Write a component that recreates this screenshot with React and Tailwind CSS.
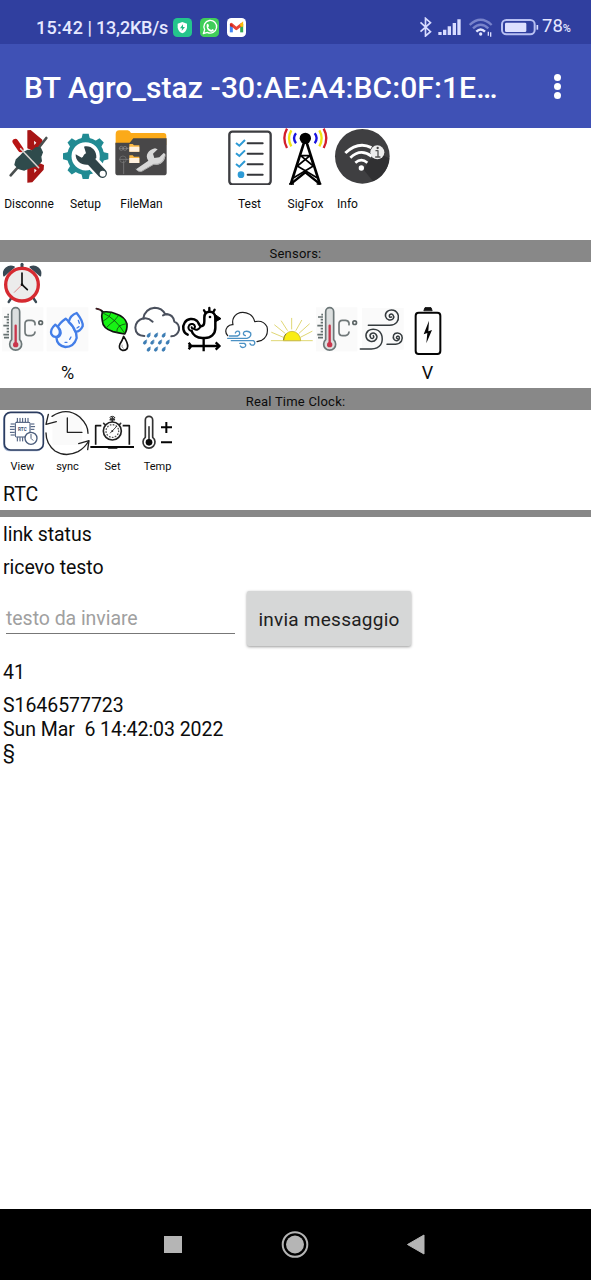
import React from "react";

function Icon({ box, className, children }) {
  return (
    <svg viewBox={box} className={className} fill="none" strokeLinecap="round" strokeLinejoin="round">
      {children}
    </svg>
  );
}

const big = "block h-[57px] w-full";
const mid = "block h-[45px] w-[45px] overflow-visible";

const Disconnect = () => (
  <Icon box="0 9 171 171" className={big}>
    <path d="M82 16 L92 15 L127 44 L128 58 L104 80 L82 70 Z M82 120 L104 108 L132 120 L131 134 L97 172 L82 173 Z" fill="#a81515" />
    <path d="M32 151 L56 124 M118 66 L139 39" stroke="#4a5050" strokeWidth="8" />
    <path d="M70 83 L84 76 L96 78 L108 68 L121 69 L127 82 L122 95 L124 108 L112 122 L92 127 L73 135 L57 131 L45 119 L49 104 L60 94 Z" fill="#2f4b4c" stroke="#2f4b4c" strokeWidth="4" />
    <path d="M46 50 L62 73" stroke="#b81414" strokeWidth="17" />
    <path d="M62 71 L116 128" stroke="#d7d2ce" strokeWidth="4.5" />
    <path d="M102 47 L109 53 L103 60 Z M103 131 L110 136 L103 144 Z" fill="#fff" />
  </Icon>
);

const gearTeeth = [0, 45, 90, 135, 180, 225, 270, 315];

const Setup = () => (
  <Icon box="170 9 168 171" className={big}>
    <circle cx="256" cy="94" r="49" stroke="#218b93" strokeWidth="13" />
    {gearTeeth.map((a) => (
      <path key={a} d="M243 43 L247 26 H265 L269 43 Z" fill="#218b93" transform={`rotate(${a} 256 94)`} />
    ))}
    <path d="M270 106 L308 146" stroke="#fff" strokeWidth="42" />
    <path d="M262 98 L306 145" stroke="#2f4449" strokeWidth="28" />
    <path d="M251 65 C271 60 290 76 288 99 L264 119 C246 122 225 110 226 88 L244 98 L258 88 Z" fill="#2f4449" />
    <circle cx="307" cy="146" r="9" fill="#fff" />
  </Icon>
);

const FileMan = () => (
  <Icon box="338 9 168 171" className={big}>
    <path d="M346 28 Q346 16 357 16 H382 Q388 16 392 24 H490 Q498 24 498 34 V60 H346 Z" fill="#fbaa19" />
    <path d="M345 53 H388 L399 40 H499 V143 Q499 151 490 151 H354 Q345 151 345 143 Z" fill="#484748" />
    <path d="M357 70 H384 M357 103 H384 M370 108 V146" stroke="#8b8b8b" strokeWidth="2" />
    <circle cx="363" cy="70" r="6" stroke="#8b8b8b" strokeWidth="2" />
    <circle cx="374" cy="70" r="6" stroke="#8b8b8b" strokeWidth="2" />
    <circle cx="368" cy="103" r="10" stroke="#777" strokeWidth="2" />
    <path d="M387 57 H397 L401 61 H417 V80 H387 Z M387 91 H397 L401 95 H417 V114 H387 Z" fill="#fbb844" />
    <path d="M387 65 H417 V80 H387 Z M387 99 H417 V114 H387 Z" fill="#fff0de" />
    <path d="M407 133 L444 107 C432 91 445 74 464 70 L472 73 L458 86 L462 99 L477 97 L490 84 L495 87 C496 109 480 123 460 118 L424 139 Q413 141 407 133 Z" fill="#d8d8d8" />
    <path d="M407 133 Q414 142 424 139 L460 118 Q488 121 494 93" stroke="#aaa" strokeWidth="3" />
  </Icon>
);

const TestList = () => (
  <Icon box="63 9 168 171" className={big}>
    <rect x="88" y="20" width="124" height="158" rx="9" fill="#fff" stroke="#3c3d41" strokeWidth="7" />
    <path d="M143 55 H188 M143 86 H188 M143 118 H188 M143 149 H188" stroke="#35363a" strokeWidth="6" />
    <path d="M108 54 L118 62 L135 45 M108 85 L118 93 L135 76 M108 117 L118 125 L135 108" stroke="#2d9bd6" strokeWidth="6" strokeLinecap="butt" strokeLinejoin="miter" />
    <circle cx="123" cy="149" r="10" fill="#2d9bd6" />
  </Icon>
);

const SigFox = () => (
  <Icon box="231 9 168 171" className={big}>
    <g strokeWidth="7" strokeLinecap="butt">
      <path d="M261 11 Q245 40 261 69 M371 11 Q387 40 371 69" stroke="#d31f2b" />
      <path d="M274 16 Q260 40 274 64 M358 16 Q372 40 358 64" stroke="#f1e414" />
      <path d="M288 25 Q276 40 288 55 M344 25 Q356 40 344 55" stroke="#1813df" />
    </g>
    <circle cx="316" cy="40" r="17" fill="#000" />
    <g stroke="#000" strokeLinecap="butt">
      <path d="M313 50 L272 178 M319 50 L360 178" strokeWidth="8" />
      <path d="M302 92 H330 L292 123 L351 158 M330 92 L341 123 M302 92 L340 123 L281 158" strokeWidth="5" />
      <path d="M272 177 L316 142 L360 177" strokeWidth="7" />
      <path d="M267 177 H282 M350 177 H364" strokeWidth="5" />
    </g>
  </Icon>
);

const Info = () => (
  <Icon box="399 9 171 171" className={big}>
    <circle cx="487" cy="94" r="82" fill="#3f3f41" />
    <path d="M491 134 L510 103 L552 92 L568 100 A82 82 0 0 1 519 169 Z" fill="#303032" />
    <g stroke="#fff" strokeLinecap="butt">
      <path d="M436 84 Q475 48 514 68" strokeWidth="9" />
      <path d="M451 98 Q482 69 515 94" strokeWidth="8" />
      <path d="M466 113 Q484 98 502 113" strokeWidth="8" />
    </g>
    <circle cx="484" cy="129" r="8" fill="#fff" />
    <circle cx="532" cy="82" r="21" fill="#ededed" />
    <path d="M528 77 H534 V95 M527 96 H540" stroke="#555" strokeWidth="4" />
    <circle cx="533" cy="69" r="3.5" fill="#444" />
  </Icon>
);

const Alarm = () => (
  <Icon box="0 83 135 135" className={mid}>
    <path d="M36 188 L26 203 M98 188 L108 203" stroke="#394954" strokeWidth="7" />
    <path d="M12 124 A22 22 0 0 1 42 98 Z M121 124 A22 22 0 0 0 91 98 Z" fill="#394954" stroke="#394954" strokeWidth="5" />
    <path d="M66 90 V100" stroke="#394954" strokeWidth="9" />
    <circle cx="66" cy="151" r="49" fill="#ececec" stroke="#d62a31" strokeWidth="10" />
    <path d="M66 116 V151 L82 166" stroke="#111" strokeWidth="5" />
    <path d="M66 151 L43 174" stroke="#d45151" strokeWidth="2" />
    <circle cx="66" cy="151" r="4" fill="#111" />
  </Icon>
);

const Thermo = ({ box = "0 216 135 135" }) => (
  <Icon box={box} className={mid}>
    <rect x="6" y="217" width="124" height="132" fill="#fafafa" />
    <path d="M35 314 V230 A12 12 0 0 1 59 230 V314 A18 18 0 1 1 35 314 Z" fill="#dcdfdf" stroke="#6c7778" strokeWidth="5" />
    <path d="M47 272 V325" stroke="#c9364c" strokeWidth="7" />
    <circle cx="47" cy="329" r="8" fill="#c9364c" />
    <path d="M22 239 H27 M12 246 H27 M20 254 H27 M20 263 H27 M10 272 H27 M20 281 H27 M20 290 H27 M10 299 H27 M12 308 H27" stroke="#657070" strokeWidth="5" strokeLinecap="butt" />
    <path d="M105 269 V264 Q103 256 94 256 H85 Q75 256 75 267 V291 Q75 302 86 302 H94 Q104 301 105 291" stroke="#707879" strokeWidth="5" />
    <circle cx="122" cy="263" r="5.5" stroke="#5d6667" strokeWidth="5" />
  </Icon>
);

const Drops = () => (
  <Icon box="135 216 135 135" className={mid}>
    <rect x="140" y="217" width="125" height="132" fill="#fafafa" />
    <g stroke="#437ee8" strokeWidth="7">
      <path d="M197 251 Q178 264 173 277 Q181 281 182 294 Q180 306 169 307 Q171 332 196 336 Q222 336 230 309 Q230 277 197 251 Z" fill="#f8fbff" />
      <path d="M166 269 Q150 283 154 297 Q160 308 171 305 Q182 300 179 286 Q174 275 166 269 Z" fill="#f8fbff" />
      <path d="M230 234 Q211 240 206 261 Q220 272 226 290 Q240 291 248 274 Q250 259 230 234 Z" fill="#f8fbff" />
      <path d="M235 256 L238 265 M237 275 L231 279 M213 306 L209 313 M201 322 H195" strokeWidth="4" />
    </g>
  </Icon>
);

const Leaf = () => (
  <Icon box="270 216 135 135" className={mid}>
    <path d="M289 221 Q301 222 310 232" stroke="#111" strokeWidth="5" />
    <path d="M290 221 L302 225" stroke="#8c2432" strokeWidth="2" />
    <path d="M307 231 Q330 228 349 237 Q376 246 381 267 Q382 285 374 297 Q355 294 339 290 Q308 280 307 258 Q303 244 307 231 Z" fill="#17f314" stroke="#111" strokeWidth="5" />
    <path d="M309 234 Q348 251 374 295 M328 244 L332 234 M326 246 Q317 254 310 258 M343 257 Q352 246 355 242 M343 257 Q331 266 321 276 M358 273 Q369 267 380 266 M358 273 Q349 281 350 292" stroke="#124d12" strokeWidth="2.5" />
    <path d="M371 304 Q367 317 360 327 Q354 341 367 346 Q382 347 383 334 Q384 324 371 304 Z" fill="#fff" stroke="#111" strokeWidth="5" />
    <path d="M366 330 Q363 337 370 340" stroke="#999" strokeWidth="3" />
  </Icon>
);

const rainDrops = [[445, 301], [467, 301], [490, 301], [434, 322], [456, 322], [479, 322], [502, 322], [445, 343], [467, 343], [490, 343]];

const Rain = () => (
  <Icon box="405 216 135 135" className={mid}>
    <path d="M433 303 Q407 302 406 278 Q408 256 430 250 Q435 221 464 218 Q486 218 496 238 Q519 236 523 260 Q539 267 537 285 Q532 303 514 304 M430 251 Q444 247 458 260 M489 241 Q497 237 504 238" stroke="#4a505d" strokeWidth="6" />
    {rainDrops.map(([x, y]) => (
      <path key={`${x}-${y}`} d={`M${x + 5} ${y - 7} Q${x - 6} ${y - 2} ${x - 4} ${y + 4} Q${x + 2} ${y + 9} ${x + 5} ${y + 2} Z`} fill="#3d7db4" stroke="#3d7db4" strokeWidth="2" />
    ))}
  </Icon>
);

const Rooster = () => (
  <Icon box="15 21 135 135" className={mid}>
    <g stroke="#000" strokeWidth="7.5">
      <path d="M38 104 C24 99 21 80 29 68 C37 55 55 54 65 62 C72 68 72 78 78 79 C86 79 88 72 88 64 V53 C88 41 95 35 104 35 C114 35 121 42 121 53 V84 C121 103 107 114 90 114 H82 C66 114 53 105 50 93" />
      <path d="M50 93 C40 92 38 82 43 75 C49 69 59 72 60 80 C60 87 51 88 50 82 M58 87 C64 92 72 88 76 81" strokeWidth="6" />
      <path d="M86 114 V154 M40 138 H132 M41 128 L49 138 L41 148 M122 127 L134 138 L122 149" strokeLinecap="butt" strokeWidth="7" />
    </g>
    <path d="M122 45 L138 56 L122 65 Z" fill="#000" stroke="#000" strokeWidth="3" />
    <path d="M91 37 L87 31 M103 33 V24 M115 36 L119 29" stroke="#000" strokeWidth="7" />
    <circle cx="105" cy="51" r="4" fill="#000" />
  </Icon>
);

const WindCloud = () => (
  <Icon box="150 21 135 135" className={mid}>
    <path d="M158 107 Q147 94 157 81 Q164 73 174 74 Q169 53 187 41 Q205 32 224 43 Q235 49 239 65 Q265 59 276 80 Q282 108 260 121 L246 125" stroke="#202020" strokeWidth="3.5" />
    <g stroke="#4b91c4" strokeWidth="4">
      <path d="M163 108 H187 Q198 104 192 94 Q184 91 181 99 M158 115 H216 Q230 111 227 99 Q220 91 208 95 Q201 103 211 107 M169 122 H236 Q243 129 236 135 Q226 137 225 130 M194 130 H208 Q216 135 209 141 Q200 145 196 138" />
    </g>
  </Icon>
);

const Sun = () => (
  <Icon box="285 21 135 135" className={mid}>
    <path d="M289 122 H412 M290 97 L323 111 M299 75 L329 99 M319 63 L337 91 M350 55 V87 M380 61 L363 91 M403 72 L372 100 M411 94 L378 111" stroke="#d9ce58" strokeWidth="2.5" />
    <path d="M325 121 A26 27 0 0 1 377 121 Z" fill="#f9ed12" stroke="#c4b638" strokeWidth="2.5" />
    <path d="M326 119 A25 26 0 0 1 332 102" stroke="#5b5630" strokeWidth="2" />
  </Icon>
);

const Wind = () => (
  <Icon box="150 216 135 135" className={mid}>
    <rect x="156" y="219" width="125" height="125" fill="#fafafa" />
    <g stroke="#353b3e" strokeWidth="4.5">
      <path d="M175 271 H239 C259 270 267 258 265 242 C261 224 242 221 232 229 C222 238 226 252 237 255 C249 257 255 247 249 240 C242 233 234 242 240 247 L245 246" />
      <path d="M151 342 H184 C212 341 219 323 216 304 C211 281 187 279 175 287 C163 298 167 315 181 319 C197 322 206 307 197 297 C187 289 176 299 182 308 C188 314 194 307 190 302" />
      <path d="M231 328 H257 C275 326 280 312 275 301 C269 292 255 292 251 300 C247 311 254 318 262 317 C270 314 270 304 264 303 C258 304 258 311 263 311" />
    </g>
  </Icon>
);

const Battery = () => (
  <Icon box="285 216 135 135" className={mid}>
    <path d="M342 226 L345 218 H363 L366 226 Z" fill="#111" stroke="#111" strokeWidth="3" />
    <rect x="317" y="233" width="74" height="124" rx="9" stroke="#050505" strokeWidth="6" />
    <path d="M357 257 L341 298 L352 294 L349 325 L366 285 L355 289 Z" fill="#050505" />
  </Icon>
);

const RtcView = () => (
  <Icon box="0 78 135 135" className={mid}>
    <rect x="9" y="84" width="120" height="115" rx="19" fill="#aebdd8" />
    <rect x="13" y="82" width="117" height="113" rx="19" fill="#fff" stroke="#2b3c60" strokeWidth="5" />
    <rect x="46" y="112" width="44" height="44" rx="3" stroke="#3b4f72" strokeWidth="3" />
    <path d="M52 100 V110 M60 100 V110 M68 100 V110 M76 100 V110 M84 100 V110 M52 158 V168 M60 158 V168 M68 158 V168 M33 117 H43 M31 125 H43 M31 133 H43 M31 142 H43 M33 150 H43 M93 117 H102 M93 125 H104 M93 133 H102" stroke="#3b4f72" strokeWidth="3" />
    <text x="67" y="138" textAnchor="middle" fontFamily="Roboto, sans-serif" fontSize="14" fontWeight="700" fill="#3b4f72">RTC</text>
    <circle cx="93" cy="160" r="18" fill="#fff" stroke="#4a5c7b" strokeWidth="4" />
    <path d="M93 148 V160 L99 166" stroke="#4a5c7b" strokeWidth="3" />
  </Icon>
);

const Sync = () => (
  <Icon box="135 78 135 135" className={mid}>
    <path d="M157 91 H246 V180 H157 Z" fill="#fafafa" />
    <g stroke="#222" strokeWidth="4">
      <path d="M156 94 Q200 65 239 96 Q265 121 264 145 M138 144 Q138 176 165 198 Q197 218 234 200 Q255 188 266 168" />
      <path d="M145 88 L138 118 L169 110 M236 176 L267 167 L263 194" />
      <path d="M202 99 V142 H246" />
    </g>
  </Icon>
);

const SetClock = () => (
  <Icon box="270 78 135 135" className={mid}>
    <path d="M287 179 V122 H304 M368 122 H388 V179" stroke="#161616" strokeWidth="5" strokeLinecap="butt" />
    <path d="M271 186 H402" stroke="#080808" strokeWidth="6" strokeLinecap="butt" />
    <path d="M326 188 H350" stroke="#080808" strokeWidth="6" />
    <path d="M331 104 H343 M337 98 V110 M311 115 L316 120 M362 115 L358 120" stroke="#333" strokeWidth="5" />
    <ellipse cx="337" cy="98" rx="7" ry="4" stroke="#333" strokeWidth="3" />
    <circle cx="337" cy="138" r="27" fill="#fff" stroke="#222" strokeWidth="5" />
    <circle cx="337" cy="138" r="19" stroke="#555" strokeWidth="4" strokeDasharray="2 7" />
    <path d="M331 144 L350 124" stroke="#444" strokeWidth="3" />
    <circle cx="337" cy="138" r="3" fill="#333" />
  </Icon>
);

const TempAdjust = () => (
  <Icon box="405 78 135 135" className={mid}>
    <path d="M436 157 V105 A10 10 0 0 1 458 105 V157 A18 18 0 1 1 436 157 Z" fill="#fff" stroke="#333" strokeWidth="5" />
    <path d="M447 125 V170" stroke="#090909" strokeWidth="4" />
    <circle cx="447" cy="172" r="10" fill="#080808" />
    <path d="M483 127 H516 M499 111 V144 M483 172 H516" stroke="#050505" strokeWidth="6" strokeLinecap="butt" />
  </Icon>
);

function ToolButton({ icon, label, left, wide }) {
  return (
    <div className={wide ? "w-[57px]" : "w-14"}>
      {icon}
      <div className={`mt-[11px] whitespace-nowrap text-[12px] leading-[17px] ${left ? "pl-1 text-left" : "pl-px text-center"}`}>{label}</div>
    </div>
  );
}

function SectionBar({ children }) {
  return <div className="flex h-[22px] items-end justify-center bg-[#888888] text-[13px] leading-[17px] tracking-[0.22px]">{children}</div>;
}

function StatusBar() {
  return (
    <div className="flex h-11 items-center bg-[#303f9f] pl-9 pt-[10px] text-[#e6e8ff]">
      <div className="w-[137px] whitespace-nowrap pt-px text-[18px] font-medium leading-6 tracking-[-0.2px]"><span className="tracking-[0.3px]">15:42</span> | 13,2KB/s</div>
      <svg viewBox="0 0 57 57" className="h-[19px] w-[19px]">
        <rect width="57" height="57" rx="13" fill="#24c58c" />
        <path d="M28 12 L42 17 V29 Q40 41 28 46 Q16 41 14 29 V17 Z" fill="#fff" />
        <path d="M30 19 L21 31 H27 L26 39 L36 27 H30 Z" fill="#24b985" />
      </svg>
      <svg viewBox="0 0 57 57" className="ml-2 h-[19px] w-[19px]" fill="none">
        <rect width="57" height="57" rx="13" fill="#40ce59" />
        <path d="M10 47 L14 35 A19 19 0 1 1 22 43 Z" stroke="#fff" strokeWidth="4" strokeLinejoin="round" />
        <path d="M20 20 Q23 15 26 20 L27 25 L24 28 Q27 34 34 36 L37 33 L42 36 Q40 43 32 41 Q18 36 20 20 Z" fill="#fff" />
      </svg>
      <svg viewBox="0 0 57 57" className="ml-2 h-[19px] w-[19px]" fill="none">
        <rect width="57" height="57" rx="13" fill="#fff" />
        <path d="M13 43 V19" stroke="#4285f4" strokeWidth="9" />
        <path d="M44 43 V19" stroke="#34a853" strokeWidth="9" />
        <path d="M13 19 L28 32 L44 19" stroke="#ea4335" strokeWidth="9" strokeLinejoin="round" strokeLinecap="round" />
        <path d="M40 23 L45 18 V26" stroke="#fbbc04" strokeWidth="7" />
        <path d="M9 18 L17 20 V27 L9 25 Z" fill="#c5221f" />
      </svg>
      <svg viewBox="57 50 38 60" className="ml-[173px] h-5 w-[13px]" fill="none">
        <path d="M61 66 L91 94 L76 107 V54 L91 67 L61 94" stroke="#d8dcff" strokeWidth="5" />
      </svg>
      <svg viewBox="115 50 69 60" className="ml-[6px] h-5 w-[23px]" fill="none">
        <path d="M121 104 V95 M135 104 V88 M149 104 V78 M164 104 V68 M178 104 V57" stroke="#d8dcff" strokeWidth="10" />
      </svg>
      <svg viewBox="207 50 72 60" className="ml-2 h-5 w-6" fill="none">
        <path d="M209 74 Q242 43 275 74 M219 84 Q242 62 265 84" stroke="#7883cb" strokeWidth="7" />
        <path d="M229 94 Q242 81 255 94" stroke="#e3e6ff" strokeWidth="7" />
        <circle cx="242" cy="101" r="5" fill="#e3e6ff" />
        <path d="M265 94 V106 M272 96 V109" stroke="#d8dcff" strokeWidth="4" />
      </svg>
      <svg viewBox="302 50 114 60" className="ml-[8px] h-5 w-[38px]" fill="none">
        <rect x="305" y="59" width="98" height="43" rx="13" stroke="#b8c0f2" strokeWidth="6" />
        <rect x="314" y="67" width="64" height="28" rx="4" fill="#dde0ff" />
        <path d="M411 74 V88" stroke="#d8dcff" strokeWidth="5" />
      </svg>
      <div className="ml-[3px] flex items-baseline pt-px text-[18.5px] leading-6">78<span className="text-[11px] font-medium">%</span></div>
    </div>
  );
}

const sensors = [
  { icon: <Thermo /> },
  { icon: <Drops />, unit: "%" },
  { icon: <Leaf /> },
  { icon: <Rain /> },
  { icon: <Rooster /> },
  { icon: <WindCloud /> },
  { icon: <Sun /> },
  { icon: <Thermo box="3 216 135 135" /> },
  { icon: <Wind /> },
  { icon: <Battery />, unit: "V" },
];

const clockTools = [
  { icon: <RtcView />, label: "View" },
  { icon: <Sync />, label: "sync" },
  { icon: <SetClock />, label: "Set" },
  { icon: <TempAdjust />, label: "Temp" },
];

export default function App() {
  return (
    <div className="flex h-[1280px] w-[591px] flex-col overflow-hidden bg-white font-[Roboto,sans-serif] text-[#0c0c0c]">
      <StatusBar />
      <header className="flex h-[84px] items-center justify-between bg-[#3f51b5] pl-6 pr-[30px] text-white">
        <h1 className="whitespace-nowrap pt-[3px] text-[30px] font-medium leading-10 tracking-[0.1px]">BT Agro_staz -30:AE:A4:BC:0F:1E…</h1>
        <div className="flex flex-col gap-[2px]">
          <span className="h-[7px] w-[7px] rounded-full bg-white" />
          <span className="h-[7px] w-[7px] rounded-full bg-white" />
          <span className="h-[7px] w-[7px] rounded-full bg-white" />
        </div>
      </header>
      <main className="flex grow flex-col">
        <div className="flex h-28">
          <ToolButton icon={<Disconnect />} label="Disconne" wide />
          <ToolButton icon={<Setup />} label="Setup" />
          <ToolButton icon={<FileMan />} label="FileMan" />
          <div className="w-[52px]" />
          <ToolButton icon={<TestList />} label="Test" />
          <ToolButton icon={<SigFox />} label="SigFox" />
          <ToolButton icon={<Info />} label="Info" left wide />
        </div>
        <SectionBar>Sensors:</SectionBar>
        <div className="h-[126px]">
          <Alarm />
          <div className="flex">
            {sensors.map((s, i) => (
              <div key={i} className="w-[45px]">
                {s.icon}
                <div className="mt-[9px] text-center text-[18px] leading-6">{s.unit}</div>
              </div>
            ))}
          </div>
        </div>
        <SectionBar>Real Time Clock:</SectionBar>
        <div className="flex h-[100px] flex-col pt-px">
          <div className="flex">
            {clockTools.map((t) => (
              <div key={t.label} className="w-[45px]">
                {t.icon}
                <div className="mt-1 text-center text-[11px] leading-[14px]">{t.label}</div>
              </div>
            ))}
          </div>
          <div className="mt-[9px] pl-[3px] text-[19.5px] leading-6">RTC</div>
        </div>
        <div className="h-[7px] bg-[#888888]" />
        <div className="pl-[3px] text-[19.5px] leading-6 tracking-[-0.05px]">
          <div className="mt-[6px]">link status</div>
          <div className="mt-[9px]">ricevo testo</div>
        </div>
        <div className="mt-[11px] flex h-[55px] pl-[6px] text-[19.5px] tracking-[-0.05px]">
          <div className="mr-3 h-[43px] w-[229px] border-b border-[#777] pt-4 leading-6 text-[#a0a0a0]">testo da inviare</div>
          <button className="h-[55px] w-[164px] whitespace-nowrap rounded-[2px] bg-[#d6d7d7] pt-[3px] text-center text-[19px] tracking-[0.25px] text-[#202020] shadow-[0_1px_3px_rgba(0,0,0,0.4)]">invia messaggio</button>
        </div>
        <div className="mt-[15px] pl-[3px] text-[19.5px] leading-6 tracking-[-0.05px]">
          <div>41</div>
          <div className="mt-[9px] whitespace-pre leading-[23.5px]">{"S1646577723\nSun Mar  6 14:42:03 2022\n§"}</div>
        </div>
      </main>
      <nav className="h-[71px] bg-black">
        <svg viewBox="0 0 591 71" className="block h-[71px] w-[591px]" fill="none">
          <rect x="164" y="27" width="18" height="17" fill="#b5b5b5" />
          <circle cx="295" cy="35.5" r="12.3" stroke="#b5b5b5" strokeWidth="2" />
          <circle cx="295" cy="35.5" r="9" fill="#b5b5b5" />
          <path d="M407.5 35.5 L424 26 V45 Z" fill="#b5b5b5" stroke="#b5b5b5" strokeWidth="1" strokeLinejoin="round" />
        </svg>
      </nav>
    </div>
  );
}
